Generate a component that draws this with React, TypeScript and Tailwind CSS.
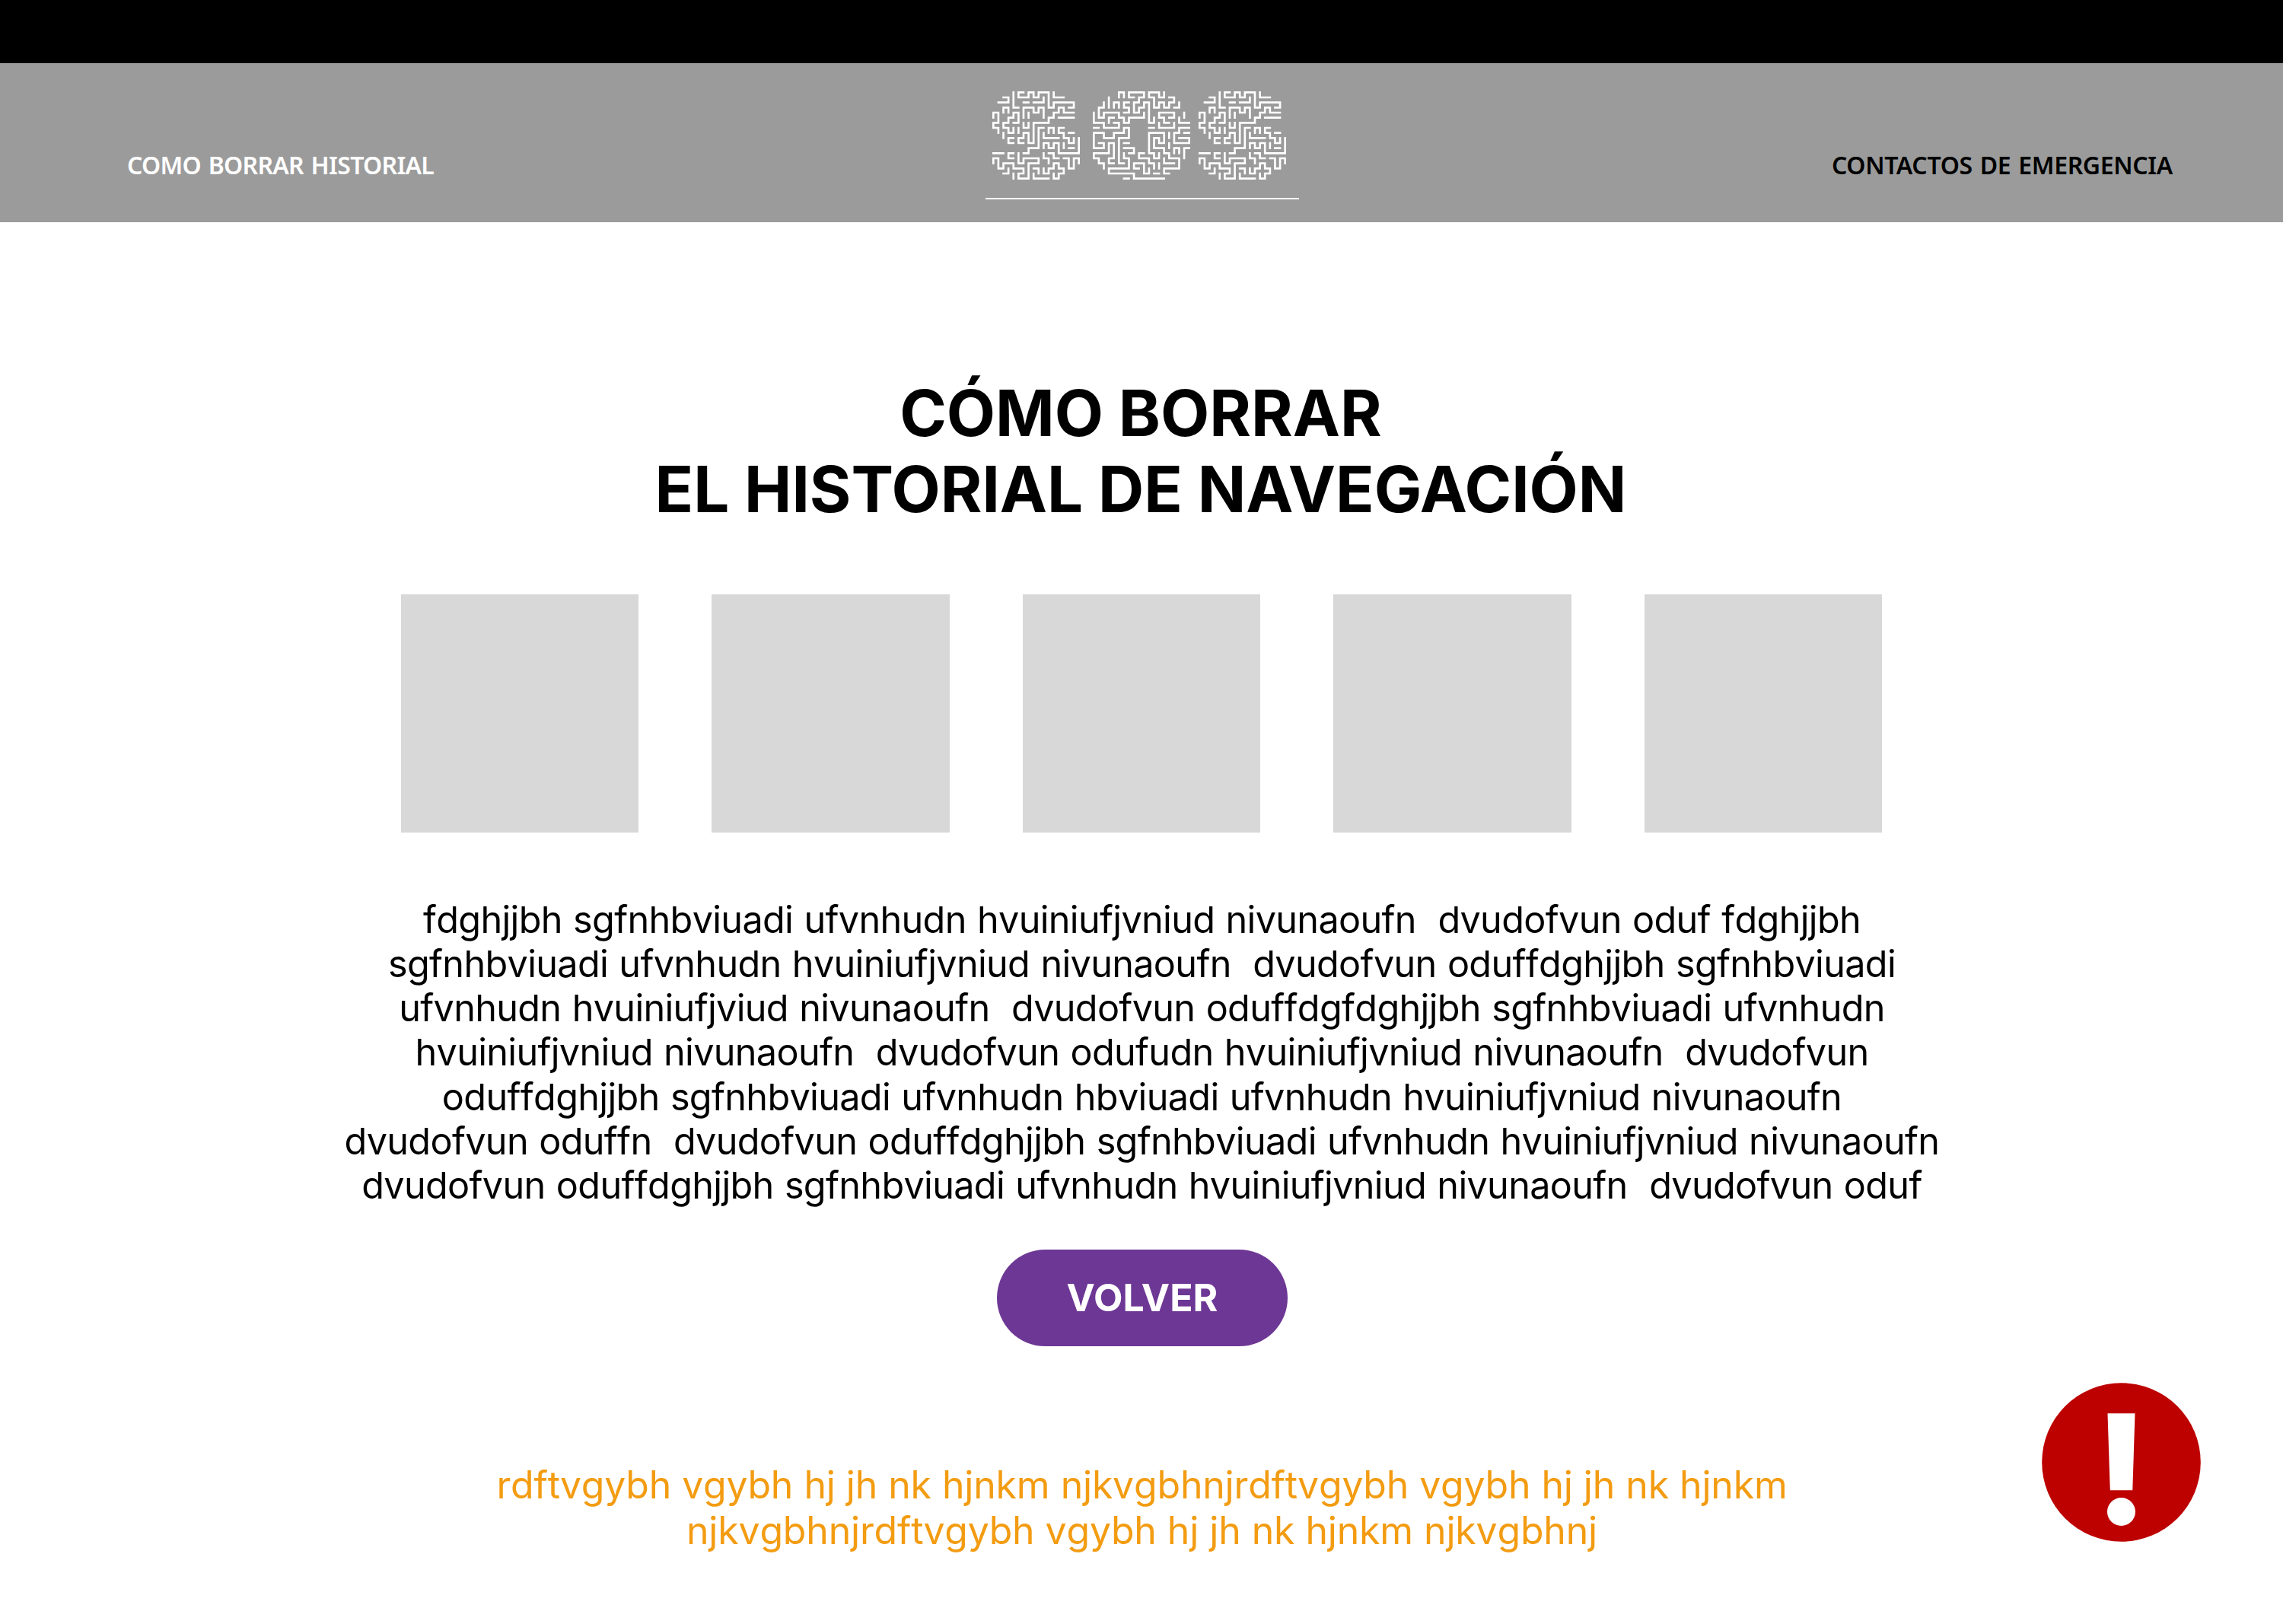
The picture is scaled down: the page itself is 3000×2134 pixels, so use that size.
const S_WALLS =
  "M2 1H3V2H1M4 0V3H5M6 0H5V1H7V0H8V1H9V0H11V3H12V2H16V3H15M12 0V1H14M6 2H7M8 2H10V1M2 4V3H3V4M6 5V3H8V4H9V3H10V5M7 4V5M0 5V4H1V6H0V7H1V8M4 6H5V4H4V5H3V6H2V7H3V8H4V7M5 7V8M2 8V9M6 6V7H7V6M16 4H14V3H13V4H12V5H11V6H8V10H7V8H6V9H5V10H6M13 5H16M4 9H3V10H4M10 7H9V11H7V12H6M11 8V7H12V8M10 8V9H13M14 7H13V8H14V9H15V10H16V9M15 8H16M10 11V10H11V11H12V10H13V12H17V9M14 10V11M15 11H16M0 12H2M4 12H3V13H4M5 12V14H6V13H9V14H7V17H5V16H6V15H4V14H2V15H1V13H0V14M2 16H3V15M4 16V17M8 15H9V16M8 16V17H11M10 12V13H11V14M11 12H12V13H13M10 15V16H11V15H12V14H13V15H14V16H13V17H12V16M14 13H15V15H16V13H17V14";

const O_WALLS =
  "M5 1V0H6V1M3 1V3M8 1H7V0H10V1H9V2H8V4H9V3H10V2H11V6H12V5M14 0V1H13V0H11V1H12V3H13V2H14V3H15V2H16V1H15M16 3H17V2M2 2V3H1V5H2V4H5V5H6V6H7V5H10V4M4 3V2H5V3M7 2H6V3H7V4H6M0 4V6H2V7H5V6H4M3 6V5H4M0 7H1M11 7H12M15 5H16V4H13V5H14V6H15M13 6V7H16V6M18 4V5M17 5V6H19M19 7H17V8H16V10H19V9H17M18 8H19M15 8V9M15 10V11M6 14H5V9H7V7H6V8H4V9H2V8H0V11H2V10H1M6 10H7M6 11H8V12H7M4 14H3V13H4V10H3V12H0V13H1V14H2V15M6 12V13H7V15H3V16H8V17H14M6 17H7M9 15H8V14H10V16H11V15M10 12H9V13H11V14H12V15M13 14V15M12 16H13M13 12V13H12V12H11V8H14V10H13V9H12V11H14V12H15V13H17V15H14V16H15M14 13V14H16M16 12V11H17V12M18 13V11H19";

function MazeLetter({ cols, d, className }: { cols: number; d: string; className: string }) {
  return (
    <svg
      viewBox={`-0.2 -0.2 ${cols + 0.4} 17.4`}
      preserveAspectRatio="none"
      className={className}
      fill="none"
      stroke="white"
      strokeWidth="0.4"
      strokeLinecap="square"
    >
      <path d={d} />
    </svg>
  );
}

const PARAGRAPH = [
  "fdghjjbh sgfnhbviuadi ufvnhudn hvuiniufjvniud nivunaoufn  dvudofvun oduf fdghjjbh",
  "sgfnhbviuadi ufvnhudn hvuiniufjvniud nivunaoufn  dvudofvun oduffdghjjbh sgfnhbviuadi",
  "ufvnhudn hvuiniufjviud nivunaoufn  dvudofvun oduffdgfdghjjbh sgfnhbviuadi ufvnhudn",
  "hvuiniufjvniud nivunaoufn  dvudofvun odufudn hvuiniufjvniud nivunaoufn  dvudofvun",
  "oduffdghjjbh sgfnhbviuadi ufvnhudn hbviuadi ufvnhudn hvuiniufjvniud nivunaoufn",
  "dvudofvun oduffn  dvudofvun oduffdghjjbh sgfnhbviuadi ufvnhudn hvuiniufjvniud nivunaoufn",
  "dvudofvun oduffdghjjbh sgfnhbviuadi ufvnhudn hvuiniufjvniud nivunaoufn  dvudofvun oduf",
];

const FOOTNOTE = [
  "rdftvgybh vgybh hj jh nk hjnkm njkvgbhnjrdftvgybh vgybh hj jh nk hjnkm",
  "njkvgbhnjrdftvgybh vgybh hj jh nk hjnkm njkvgbhnj",
];

export default function App() {
  return (
    <div className="relative flex h-[2134px] w-[3000px] flex-col overflow-hidden bg-white font-['Inter',sans-serif] text-black">
      <div className="h-[83px] shrink-0 bg-black" />
      <header className="grid h-[209px] shrink-0 grid-cols-[1295px_412px_1fr] bg-[#9b9b9b] font-['Noto_Sans',sans-serif] text-[32px] leading-[44px] font-semibold">
        <a className="mt-[112px] ml-[167px] tracking-[-0.7px] whitespace-nowrap text-white [word-spacing:2px]">
          COMO BORRAR HISTORIAL
        </a>
        <div className="flex flex-col">
          <div className="mt-[37px] flex h-[116px] pl-[9px]">
            <MazeLetter cols={17} d={S_WALLS} className="h-[116px] w-[115px]" />
            <MazeLetter cols={19} d={O_WALLS} className="ml-[17px] h-[116px] w-[128px]" />
            <MazeLetter cols={17} d={S_WALLS} className="ml-[11px] h-[116px] w-[115px]" />
          </div>
          <div className="mt-[24px] h-[2px] bg-white" />
        </div>
        <a className="mt-[112px] mr-[145px] text-right tracking-[-0.35px] whitespace-nowrap [word-spacing:2px]">
          CONTACTOS DE EMERGENCIA
        </a>
      </header>

      <main className="flex flex-col items-center">
        <h1 className="mt-[201px] mr-[2px] text-center text-[83.4px] leading-[100px] font-bold">
          CÓMO BORRAR
          <br />
          EL HISTORIAL DE NAVEGACIÓN
        </h1>
        <div className="mt-[88px] flex gap-[96px]">
          {[0, 1, 2, 3, 4].map((i) => (
            <div key={i} className="h-[313px] w-[312.5px] bg-[#d8d8d8]" />
          ))}
        </div>
        <div className="mt-[85.5px] ml-[1px] text-center text-[48.6px] leading-[58.33px] tracking-[-0.68px] whitespace-pre [font-kerning:none] [word-spacing:1.3px]">
          {PARAGRAPH.map((line) => (
            <p key={line}>{line}</p>
          ))}
        </div>
        <button className="mt-[54px] ml-[2px] flex h-[127px] w-[382px] items-center justify-center rounded-full bg-[#6d3795] text-[50px] leading-[60px] font-bold text-white">
          VOLVER
        </button>
        <div className="mt-[152px] ml-[1px] text-center text-[50px] leading-[60px] tracking-[-0.2px] whitespace-pre text-[#f39c12] [font-kerning:none] [word-spacing:0.3px]">
          {FOOTNOTE.map((line) => (
            <p key={line}>{line}</p>
          ))}
        </div>
      </main>

      <svg viewBox="0 0 209 209" className="absolute top-[1817px] left-[2683px] h-[209px] w-[209px]">
        <circle cx="104.5" cy="104.5" r="104.3" fill="#bd0000" />
        <path d="M86.5 40.3H122.5L119.3 141.3H89.8Z" fill="white" />
        <circle cx="104.5" cy="169.5" r="18.5" fill="white" />
      </svg>
    </div>
  );
}
